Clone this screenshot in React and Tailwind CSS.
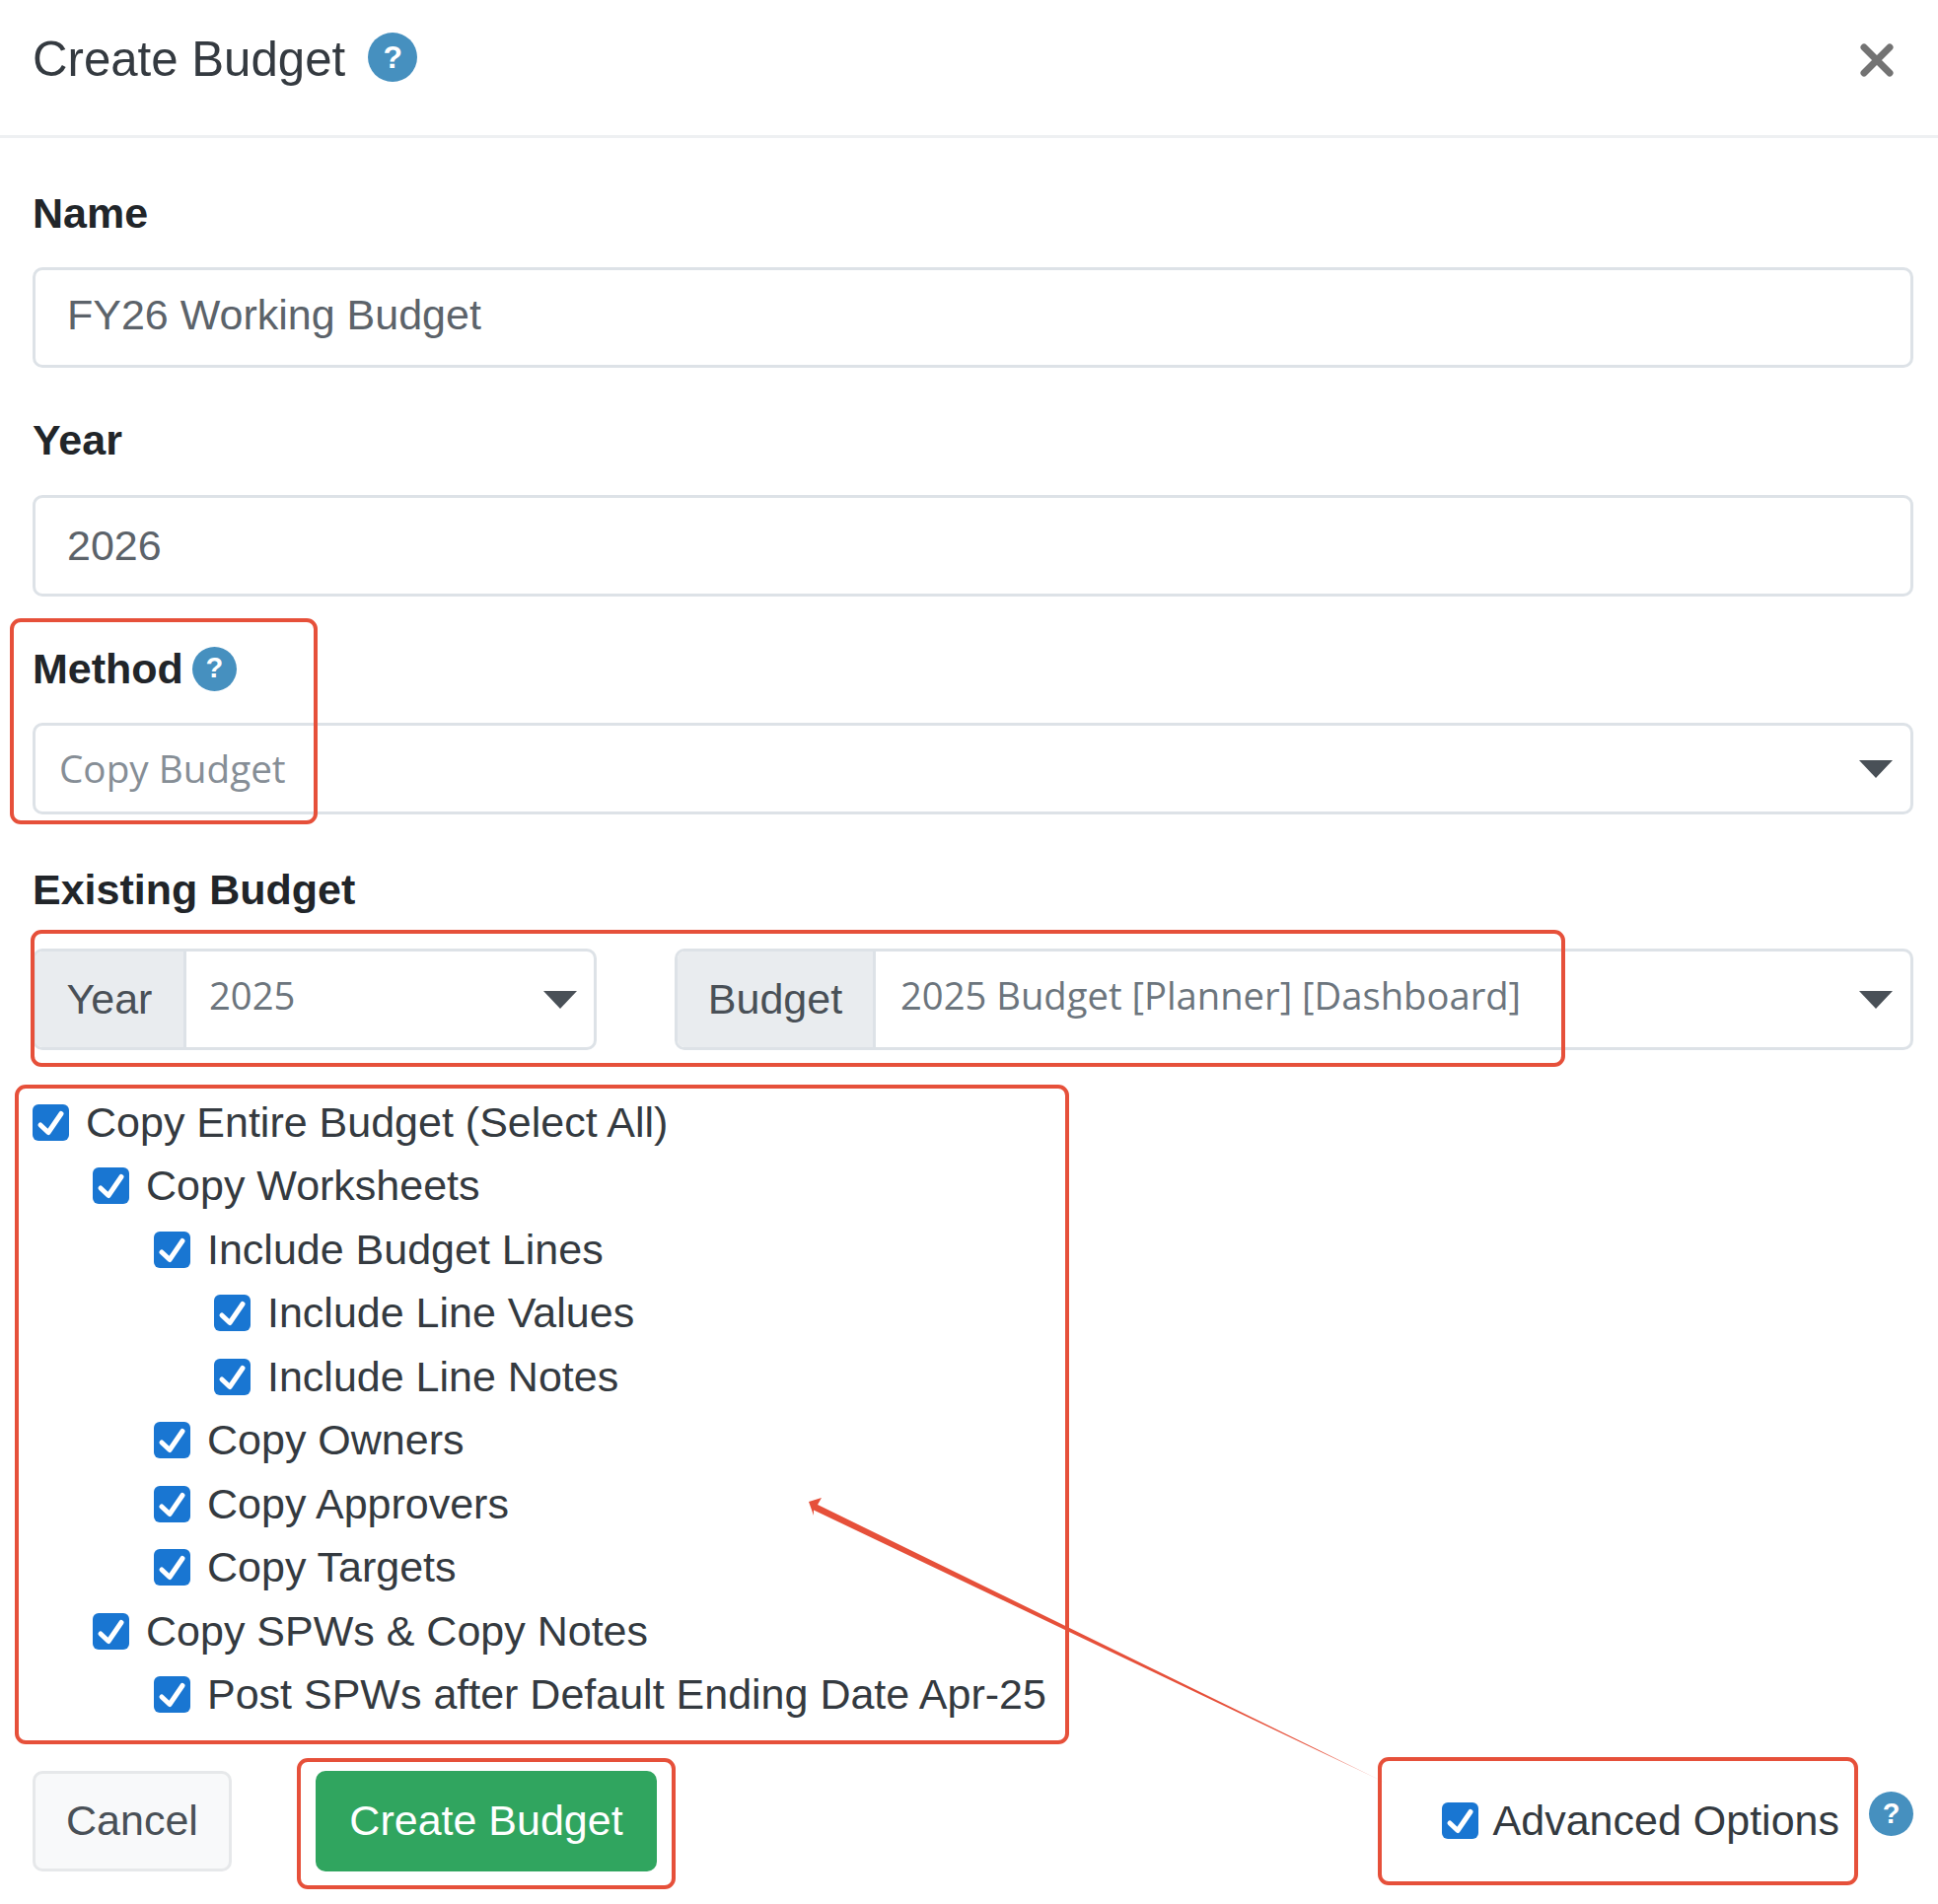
const sans = "font-['Liberation_Sans',Arial,sans-serif]";

function HelpIcon({ className }) {
  return (
    <span className={`flex shrink-0 items-center justify-center rounded-full bg-[#4690bf] font-bold text-white ${className}`}>?</span>
  );
}

function Caret() {
  return (
    <svg width="34" height="18" viewBox="0 0 34 18" className="shrink-0">
      <path d="M0 0H34L17 18Z" fill="#495057" />
    </svg>
  );
}

function Check() {
  return (
    <span className="flex h-[37px] w-[37px] shrink-0 items-center justify-center rounded-[6px] bg-[#1976d2]">
      <svg width="37" height="37" viewBox="0 0 37 37" fill="none" stroke="white" strokeWidth="5" strokeLinecap="round" strokeLinejoin="round">
        <path d="M8 21L16 28.5L29 9.5" />
      </svg>
    </span>
  );
}

function Label({ children, className = '' }) {
  return <div className={`text-[43px] leading-[50px] font-bold text-[#212529] ${className}`}>{children}</div>;
}

const checks = [
  ['Copy Entire Budget (Select All)', 'pl-0'],
  ['Copy Worksheets', 'pl-[61px]'],
  ['Include Budget Lines', 'pl-[123px]'],
  ['Include Line Values', 'pl-[184px]'],
  ['Include Line Notes', 'pl-[184px]'],
  ['Copy Owners', 'pl-[123px]'],
  ['Copy Approvers', 'pl-[123px]'],
  ['Copy Targets', 'pl-[123px]'],
  ['Copy SPWs & Copy Notes', 'pl-[61px]'],
  ['Post SPWs after Default Ending Date Apr-25', 'pl-[123px]'],
];

const boxes = [
  'left-[10px] top-[627px] h-[209px] w-[312px]',
  'left-[31px] top-[943px] h-[139px] w-[1556px]',
  'left-[15px] top-[1100px] h-[669px] w-[1069px]',
  'left-[301px] top-[1783px] h-[133px] w-[384px]',
  'left-[1397px] top-[1782px] h-[130px] w-[487px]',
];

export default function App() {
  return (
    <div className={`relative h-[1931px] w-[1965px] overflow-hidden bg-white ${sans}`}>
      {/* Header */}
      <div className="flex h-[140px] items-center justify-between border-b-[3px] border-[#eef0f2] pb-[17px] pl-[33px] pr-[45px]">
        <div className="flex items-center gap-[23px]">
          <span className="text-[49.2px] text-[#343a40]">Create Budget</span>
          <HelpIcon className="mb-[3px] h-[50px] w-[50px] text-[32px]" />
        </div>
        <svg className="mt-[2px]" width="34" height="34" viewBox="0 0 34 34" stroke="#737373" strokeWidth="7" strokeLinecap="round">
          <path d="M4 4L30 30M30 4L4 30" />
        </svg>
      </div>

      <div className="pl-[33px] pr-[25px]">
        <Label className="mt-[51px]">Name</Label>
        <div className="mt-[30px] flex h-[102px] items-center rounded-[10px] border-[3px] border-[#dde2e7] pb-[5px] pl-[32px] text-[43px] text-[#5c636a]">
          FY26 Working Budget
        </div>

        <Label className="mt-[48px]">Year</Label>
        <div className="mt-[31px] flex h-[103px] items-center rounded-[10px] border-[3px] border-[#dde2e7] pl-[32px] text-[43px] text-[#5c636a]">
          2026
        </div>

        <div className="mt-[48px] flex h-[50px] items-center gap-[9px]">
          <Label>Method</Label>
          <HelpIcon className="h-[45px] w-[45px] text-[29px]" />
        </div>
        <div className="mt-[30px] flex h-[93px] items-center justify-between rounded-[10px] border-[3px] border-[#dde2e7] pl-[24px] pr-[18px]">
          <span className="font-['Open_Sans',sans-serif] text-[38.7px] text-[#868e96]">Copy Budget</span>
          <Caret />
        </div>

        <Label className="mt-[51px]">Existing Budget</Label>
        <div className="mt-[35px] flex gap-[79px]">
          <div className="flex h-[103px] w-[572px] items-stretch overflow-hidden rounded-[10px] border-[3px] border-[#dde2e7]">
            <div className="flex w-[153px] items-center justify-center border-r-[3px] border-[#dde2e7] bg-[#e9ecef] text-[43px] text-[#495057]">Year</div>
            <div className="flex flex-1 items-center justify-between pl-[23px] pr-[17px]">
              <span className="mb-[8px] font-['Open_Sans',sans-serif] text-[38.2px] text-[#6c757d]">2025</span>
              <Caret />
            </div>
          </div>
          <div className="flex h-[103px] flex-1 items-stretch overflow-hidden rounded-[10px] border-[3px] border-[#dde2e7]">
            <div className="flex w-[201px] items-center justify-center border-r-[3px] border-[#dde2e7] bg-[#e9ecef] text-[43px] text-[#495057]">Budget</div>
            <div className="flex flex-1 items-center justify-between pl-[25px] pr-[18px]">
              <span className="mb-[8px] font-['Open_Sans',sans-serif] text-[38.2px] text-[#6c757d]">2025 Budget [Planner] [Dashboard]</span>
              <Caret />
            </div>
          </div>
        </div>

        {/* Copy options */}
        <div className="mt-[48px] flex flex-col gap-[14.5px]">
          {checks.map(([text, indent]) => (
            <div key={text} className={`flex h-[50px] items-center gap-[17px] text-[43px] text-[#343a40] ${indent}`}>
              <Check />
              <span>{text}</span>
            </div>
          ))}
        </div>

        {/* Footer */}
        <div className="mt-[52px] flex items-center">
          <div className="flex h-[102px] w-[202px] items-center justify-center rounded-[10px] border-[3px] border-[#e6e8ea] bg-[#f8f9fa] text-[43px] text-[#495057]">Cancel</div>
          <div className="ml-[85px] flex h-[102px] w-[346px] items-center justify-center rounded-[10px] bg-[#30a55f] text-[43px] text-white">Create Budget</div>
          <div className="ml-auto flex items-center text-[43px] text-[#343a40]">
            <Check />
            <span className="ml-[15px]">Advanced Options</span>
            <HelpIcon className="mb-[14px] ml-[30px] h-[45px] w-[45px] text-[29px]" />
          </div>
        </div>
      </div>

      {/* Annotations drawn on top of the form */}
      {boxes.map(b => (
        <div key={b} className={`absolute rounded-[11px] border-[4px] border-[#e6503a] ${b}`} />
      ))}
      <svg className="absolute left-0 top-0" width="1965" height="1931" viewBox="0 0 1965 1931">
        <defs>
          <linearGradient id="tail" gradientUnits="userSpaceOnUse" x1="1340" y1="1770" x2="1413" y2="1812">
            <stop offset="0" stopColor="#e6503a" />
            <stop offset="1" stopColor="#e6503a" stopOpacity="0" />
          </linearGradient>
        </defs>
        <path d="M820 1523L833 1519L829 1526L1413 1812L825 1531.5L825 1537Z" fill="url(#tail)" />
      </svg>
    </div>
  );
}
